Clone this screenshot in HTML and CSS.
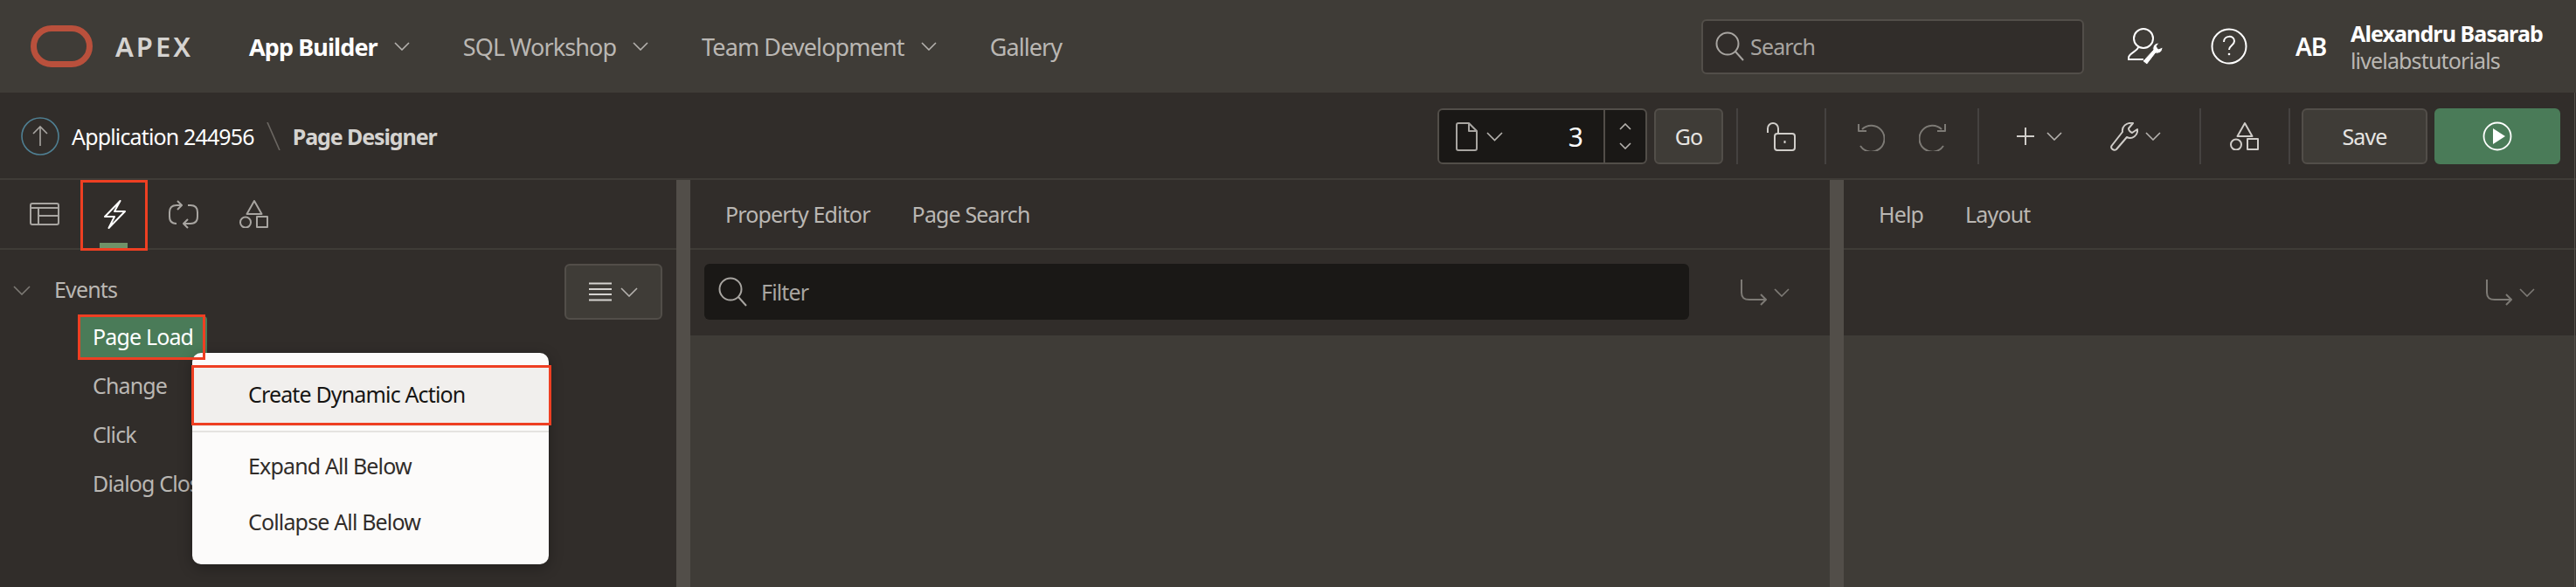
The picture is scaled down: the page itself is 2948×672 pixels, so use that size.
FILE: index.html
```html
<!DOCTYPE html>
<html lang="en">
<head>
  <meta charset="UTF-8">
  <title>Page Designer</title>
  <link rel="stylesheet" href="styles.css">
</head>
<body>
  <!-- Top navigation -->
  <header class="topbar">
    <svg class="logo" width="71" height="48" viewBox="0 0 71 48"><rect x="3.5" y="3.5" width="64" height="41" rx="20.5" fill="none" stroke="#b9503c" stroke-width="7"/></svg>
    <span class="brand">APEX</span>
    <nav class="mainnav">
      <a class="nav-item active">App Builder <svg class="chev" width="18" height="10" viewBox="0 0 18 10"><path d="M1 1l8 8 8-8"/></svg></a>
      <a class="nav-item">SQL Workshop <svg class="chev" width="18" height="10" viewBox="0 0 18 10"><path d="M1 1l8 8 8-8"/></svg></a>
      <a class="nav-item">Team Development <svg class="chev" width="18" height="10" viewBox="0 0 18 10"><path d="M1 1l8 8 8-8"/></svg></a>
      <a class="nav-item">Gallery</a>
    </nav>
    <div class="globalsearch">
      <svg class="icon-line" width="34" height="34" viewBox="0 0 34 34"><circle cx="14" cy="14" r="12.500"/><path d="M23 23l9 10"/></svg>
      <span>Search</span>
    </div>
    <svg class="user-tools" width="42" height="42" viewBox="0 0 42 42">
      <circle cx="19" cy="12" r="11"/>
      <path d="M13 22c0 4-11 7-11 12v2h17"/>
      <path class="wrench" d="M18 38l12-13c-1-4 2-8 7-8l-3 4 2 3 5-2c0 5-4 8-8 7L23 42z"/>
    </svg>
    <svg class="help" width="42" height="42" viewBox="0 0 42 42"><circle cx="21" cy="21" r="19.500"/><path d="M15 16c0-8 12-8 12-1 0 5-6 5-6 10"/><circle class="dot" cx="21" cy="30" r="1.300"/></svg>
    <span class="initials">AB</span>
    <div class="user">
      <div class="user-name">Alexandru Basarab</div>
      <div class="user-app">livelabstutorials</div>
    </div>
  </header>

  <!-- Page designer toolbar -->
  <div class="toolbar">
    <svg class="up" width="44" height="44" viewBox="0 0 44 44"><circle cx="22" cy="22" r="21" fill="none" stroke="#4f7f92" stroke-width="1.600"/><path d="M22 33V11M14 19l8-8 8 8" fill="none" stroke="#a8a5a1" stroke-width="1.600"/></svg>
    <span class="crumb">Application 244956</span>
    <svg class="slash" width="16" height="32" viewBox="0 0 16 32"><path d="M1 0l14 32" stroke="#6b6762" stroke-width="1.600"/></svg>
    <span class="crumb current">Page Designer</span>

    <div class="tools">
      <div class="pagepick">
        <svg class="icon-line" width="25" height="33" viewBox="0 0 25 33"><path d="M1 3a2 2 0 0 1 2-2h12l9 9v20a2 2 0 0 1-2 2H3a2 2 0 0 1-2-2zM15 1v9h9"/></svg>
        <svg class="chev" width="19" height="11" viewBox="0 0 19 11"><path d="M1 1l8.500 8.500L18 1"/></svg>
        <span class="pagenum">3</span>
        <div class="stepper">
          <svg class="chev" width="14" height="8" viewBox="0 0 14 8"><path d="M1 7l6-6 6 6"/></svg>
          <svg class="chev" width="14" height="8" viewBox="0 0 14 8"><path d="M1 1l6 6 6-6"/></svg>
        </div>
      </div>
      <button class="btn go">Go</button>
      <i class="sep sep-a"></i>
      <svg class="icon-line light t-lock" width="33" height="33" viewBox="0 0 33 33"><path d="M1 12V7a6 6 0 0 1 12 0v6"/><rect x="9" y="13" width="23" height="19" rx="3"/><path d="M20.500 21v3"/></svg>
      <i class="sep sep-b"></i>
      <svg class="icon-line dim t-undo" width="31" height="33" viewBox="0 0 31 33"><path d="M5 8a15 15 0 1 1-2 19"/><path d="M1 2v8h9"/></svg>
      <svg class="icon-line dim t-redo" width="31" height="33" viewBox="0 0 31 33"><path d="M26 8a15 15 0 1 0 2 19"/><path d="M30 2v8h-9"/></svg>
      <i class="sep sep-c"></i>
      <svg class="icon-line light t-plus" width="20" height="20" viewBox="0 0 20 20"><path d="M10 0v20M0 10h20"/></svg>
      <svg class="chev t-chev" width="18" height="10" viewBox="0 0 18 10"><path d="M1 1l8 8 8-8"/></svg>
      <svg class="icon-line light t-wrench" width="32" height="33" viewBox="0 0 32 33"><path d="M1.500 27L14 11C13 5 18 0 26 1l-5 6c0 2 2 4 4 5l6-4c1 7-6 12-12 9L7 31c-3 2-7-1-5.500-4z"/></svg>
      <svg class="chev t-chev2" width="18" height="10" viewBox="0 0 18 10"><path d="M1 1l8 8 8-8"/></svg>
      <i class="sep sep-d"></i>
      <svg class="icon-line light t-shapes" width="33" height="32" viewBox="0 0 33 32"><path d="M17 1l8.500 15h-17z"/><circle cx="7" cy="25.500" r="6"/><rect x="20" y="19" width="12" height="12"/></svg>
      <i class="sep sep-e"></i>
      <button class="btn save">Save</button>
      <button class="btn run"><svg width="34" height="34" viewBox="0 0 34 34"><circle cx="17" cy="17" r="15.500" fill="none" stroke="#fff" stroke-width="1.800"/><path d="M12 8l14 9-14 9z" fill="#fff"/></svg></button>
    </div>
  </div>

  <!-- Panels -->
  <main class="panels">
    <section class="panel left">
      <div class="tabs">
        <div class="tab" id="tabRendering"><svg class="icon-line" width="34" height="26" viewBox="0 0 34 26"><rect x="1" y="1" width="32" height="24" rx="2"/><path d="M1 6h32M10 6v19M10 15h23"/></svg></div>
        <div class="tab selected" id="tabEvents"><svg class="icon-line white" width="25" height="33" viewBox="0 0 25 33"><path d="M18.500 1L1 19h11L5.500 32 24 13H12z"/></svg></div>
        <div class="tab" id="tabProcessing"><svg class="icon-line" width="34" height="33" viewBox="0 0 34 33"><path d="M9 27c-5 0-8-3-8-8v-5c0-5 3-8 8-8h6M10 1l5 5-5 5M22 6h3c5 0 8 3 8 8v5c0 5-3 8-8 8h-8M22 22l-5 5 5 5"/></svg></div>
        <div class="tab" id="tabShared"><svg class="icon-line" width="33" height="32" viewBox="0 0 33 32"><path d="M17 1l8.500 15h-17z"/><circle cx="7" cy="25.500" r="6"/><rect x="20" y="19" width="12" height="12"/></svg></div>
      </div>
      <div class="tree">
        <div class="tree-head">
          <svg class="chev dim" width="20" height="11" viewBox="0 0 20 11"><path d="M1 1l9 9 9-9"/></svg>
          <span>Events</span>
          <button class="btn tree-menu">
            <svg width="26" height="22" viewBox="0 0 26 22"><path d="M0 1.500h26M0 8h26M0 14h26M0 20.500h26" stroke="#d5d3d0" stroke-width="2"/></svg>
            <svg class="chev" width="20" height="11" viewBox="0 0 20 11"><path d="M1 1l9 9 9-9"/></svg>
          </button>
        </div>
        <div class="node selected">Page Load</div>
        <div class="node">Change</div>
        <div class="node">Click</div>
        <div class="node">Dialog Closed</div>
      </div>
    </section>
    <div class="splitter"></div>
    <section class="panel middle">
      <div class="tabs text-tabs">
        <span>Property Editor</span>
        <span>Page Search</span>
      </div>
      <div class="filterbar">
        <div class="filter">
          <svg class="icon-line" width="34" height="34" viewBox="0 0 34 34"><circle cx="14" cy="14" r="12.500"/><path d="M23 23l9 10"/></svg>
          <span>Filter</span>
        </div>
        <svg class="icon-line dim goto" width="30" height="31" viewBox="0 0 30 31"><path d="M1 0v15c0 6 3 8 9 8h19M23 17l6 6-6 6"/></svg>
        <svg class="chev dim" width="18" height="10" viewBox="0 0 18 10"><path d="M1 1l8 8 8-8"/></svg>
      </div>
      <div class="panel-body"></div>
    </section>
    <div class="splitter"></div>
    <section class="panel right">
      <div class="tabs text-tabs">
        <span>Help</span>
        <span>Layout</span>
      </div>
      <div class="filterbar end">
        <svg class="icon-line dim goto" width="30" height="31" viewBox="0 0 30 31"><path d="M1 0v15c0 6 3 8 9 8h19M23 17l6 6-6 6"/></svg>
        <svg class="chev dim" width="18" height="10" viewBox="0 0 18 10"><path d="M1 1l8 8 8-8"/></svg>
      </div>
      <div class="panel-body"></div>
    </section>
  </main>
  <div class="edge"></div>

  <!-- Context menu -->
  <div class="menu">
    <div class="menu-item first">Create Dynamic Action</div>
    <div class="menu-sep"></div>
    <div class="menu-item">Expand All Below</div>
    <div class="menu-item">Collapse All Below</div>
  </div>

  <!-- Red tutorial highlights -->
  <div class="mark mark-tab"></div>
  <div class="mark mark-node"></div>
  <div class="mark mark-menu"></div>
</body>
</html>
```

FILE: styles.css
```css
body {
  margin: 0;
  width: 2948px;
  height: 672px;
  overflow: hidden;
  position: relative;
  background: #3f3c37;
  font-family: "Noto Sans", Arial, sans-serif;
  font-size: 25px;
  letter-spacing: -0.85px;
  color: #d5d3d0;
}
svg {
  display: block;
  flex: none;
}
.chev path {
  fill: none;
  stroke: #b5b2ae;
  stroke-width: 1.6;
}
.chev.dim path {
  stroke: #7d7a75;
}
.icon-line {
  fill: none;
  stroke: #a8a5a1;
  stroke-width: 2;
  stroke-linejoin: round;
}
.icon-line.white {
  stroke: #fff;
}
.icon-line.light {
  stroke: #d0cdc9;
}
.icon-line.dim {
  stroke: #7d7a75;
}

/* Top navigation */
.topbar {
  height: 106px;
  display: flex;
  align-items: center;
  padding: 0 28px 0 35px;
  background: #3f3c37;
}
.brand {
  margin-left: 26px;
  font-size: 31px;
  font-weight: 600;
  letter-spacing: 3px;
  color: #d5d3d0;
}
.mainnav {
  display: flex;
  flex: 1;
  margin-left: 64px;
  font-size: 27px;
  letter-spacing: -0.9px;
}
.nav-item {
  display: flex;
  align-items: center;
  gap: 19px;
  margin-right: 61px;
  color: #bab7b3;
}
.nav-item.active {
  color: #fff;
  font-weight: 700;
  letter-spacing: -0.9px;
}
.globalsearch {
  width: 438px;
  height: 63px;
  box-sizing: border-box;
  display: flex;
  align-items: center;
  gap: 6px;
  padding-left: 14px;
  background: #312d2a;
  border: 2px solid #524e49;
  border-radius: 6px;
  color: #a8a5a1;
}
.user-tools {
  margin-left: 49px;
  fill: none;
  stroke: #fff;
  stroke-width: 2;
}
.user-tools .wrench {
  fill: #fff;
  stroke: #3f3c37;
  stroke-width: 1;
}
.help {
  margin-left: 54px;
  fill: none;
  stroke: #fff;
  stroke-width: 2;
}
.help .dot {
  fill: #fff;
  stroke: none;
}
.initials {
  margin-left: 55px;
  width: 38px;
  font-weight: 600;
  font-size: 28px;
  letter-spacing: -1px;
  color: #fff;
}
.user {
  margin-left: 25px;
  width: 230px;
  white-space: nowrap;
}
.user-name {
  font-weight: 700;
  letter-spacing: -0.9px;
  color: #fff;
  line-height: 33px;
}
.user-app {
  color: #bab7b3;
  line-height: 29px;
}

/* Toolbar */
.toolbar {
  height: 100px;
  box-sizing: border-box;
  display: flex;
  align-items: center;
  padding: 2px 18px 0 24px;
  background: #312d2a;
  border-bottom: 2px solid #3f3c37;
}
.crumb {
  margin-left: 14px;
  color: #fff;
}
.crumb.current {
  font-weight: 700;
  letter-spacing: -1.1px;
  color: #d5d3d0;
}
.slash {
  margin-left: 14px;
}
.tools {
  display: flex;
  align-items: center;
  margin-left: auto;
  height: 64px;
}
.pagepick {
  width: 240px;
  height: 64px;
  box-sizing: border-box;
  display: flex;
  align-items: center;
  padding-left: 19px;
  background: #1a1816;
  border: 2px solid #524e49;
  border-radius: 6px;
  color: #fff;
  gap: 10px;
}
.pagenum {
  margin-left: auto;
  padding-right: 14px;
  font-size: 30px;
}
.stepper {
  width: 46px;
  align-self: stretch;
  display: flex;
  flex-direction: column;
  align-items: center;
  justify-content: space-evenly;
  border-left: 2px solid #524e49;
}
.btn {
  height: 64px;
  box-sizing: border-box;
  border: 2px solid #524e49;
  border-radius: 6px;
  background: #3f3c37;
  color: #e6e4e1;
  font: inherit;
  letter-spacing: inherit;
  padding: 0;
}
.go {
  width: 79px;
  margin-left: 8px;
}
.sep {
  width: 2px;
  height: 64px;
  background: #454240;
}
.save {
  width: 144px;
  margin-left: 13px;
}
.run {
  width: 144px;
  margin-left: 8px;
  background: #4a7b58;
  border-color: #4a7b58;
  display: flex;
  align-items: center;
  justify-content: center;
}
.sep-a { margin-left: 15px; }
.t-lock { margin-left: 33px; }
.sep-b { margin-left: 33px; }
.t-undo { margin-left: 36px; }
.t-redo { margin-left: 39px; }
.sep-c { margin-left: 36px; }
.t-plus { margin-left: 43px; }
.t-chev { margin-left: 14px; }
.t-wrench { margin-left: 55px; }
.t-chev2 { margin-left: 8px; }
.sep-d { margin-left: 44px; }
.t-shapes { margin-left: 33px; }
.sep-e { margin-left: 34px; }

/* Panels */
.panels {
  display: flex;
  height: 466px;
}
.panel {
  display: flex;
  flex-direction: column;
}
.panel.left {
  width: 774px;
  background: #312d2a;
}
.panel.middle {
  width: 1304px;
}
.panel.right {
  flex: 1;
}
.splitter {
  width: 16px;
  background: #524e49;
}
.edge {
  position: absolute;
  right: 1px;
  top: 106px;
  bottom: 0;
  width: 1px;
  background: #55514c;
}
.tabs {
  height: 80px;
  flex: none;
  box-sizing: border-box;
  display: flex;
  align-items: center;
  background: #312d2a;
  border-bottom: 2px solid #3f3c37;
}
.tab {
  width: 78px;
  height: 78px;
  display: flex;
  align-items: center;
  justify-content: center;
  position: relative;
}
#tabRendering { margin-left: 12px; }
#tabEvents { margin-left: 2px; }
#tabProcessing { margin-left: 1px; }
#tabShared { margin-left: 2px; }
.tab.selected::after {
  content: "";
  position: absolute;
  left: 22px;
  bottom: 0;
  width: 32px;
  height: 6px;
  background: #6f9268;
}
.text-tabs {
  gap: 48px;
  padding-left: 40px;
  color: #bab7b3;
}
.filterbar {
  height: 98px;
  flex: none;
  display: flex;
  align-items: center;
  background: #312d2a;
  padding-left: 16px;
}
.filterbar.end {
  justify-content: flex-end;
  padding-right: 47px;
}
.filter {
  width: 1127px;
  height: 64px;
  margin-bottom: 2px;
  display: flex;
  align-items: center;
  gap: 15px;
  padding-left: 16px;
  box-sizing: border-box;
  background: #1a1816;
  border-radius: 6px;
  color: #a8a5a1;
}
.goto {
  margin-left: 59px;
}
.filterbar .chev {
  margin-left: 8px;
}
.filterbar.end .goto {
  margin-left: 0;
}
.tree {
  flex: 1;
  padding: 16px 16px 0 15px;
  background: #312d2a;
}
.tree-head {
  display: flex;
  height: 60px;
  align-items: center;
  color: #bab7b3;
}
.tree-head span {
  margin: 0 0 2px 27px;
}
.tree-menu {
  margin-left: auto;
  width: 112px;
  align-self: flex-start;
  display: flex;
  align-items: center;
  justify-content: center;
  gap: 10px;
}
.node {
  width: max-content;
  height: 49px;
  line-height: 47px;
  margin: 0 0 7px 76px;
  padding: 0 16px 0 15px;
  color: #bab7b3;
  white-space: nowrap;
  border-radius: 4px;
}
.node.selected {
  color: #fff;
  background: #4a7b58;
}

/* Context menu */
.menu {
  position: absolute;
  left: 220px;
  top: 404px;
  width: 408px;
  height: 242px;
  box-sizing: border-box;
  padding-top: 14px;
  background: #fcfbfa;
  border-radius: 10px;
  box-shadow: 0 4px 16px rgba(0, 0, 0, 0.3);
  color: #312d2a;
}
.menu-item {
  height: 64px;
  line-height: 58px;
  padding-left: 64px;
}
.menu-item.first {
  height: 70px;
  line-height: 67px;
  background: #f1efed;
  color: #161513;
}
.menu-sep {
  height: 2px;
  margin: 5px 0 9px;
  background: #e5e3e0;
}

/* Red tutorial highlights */
.mark {
  position: absolute;
  box-sizing: border-box;
  border: 3px solid #ee3f22;
}
.mark-tab {
  left: 92px;
  top: 206px;
  width: 77px;
  height: 81px;
}
.mark-node {
  left: 89px;
  top: 360px;
  width: 146px;
  height: 52px;
}
.mark-menu {
  left: 219px;
  top: 418px;
  width: 412px;
  height: 69px;
}
```
